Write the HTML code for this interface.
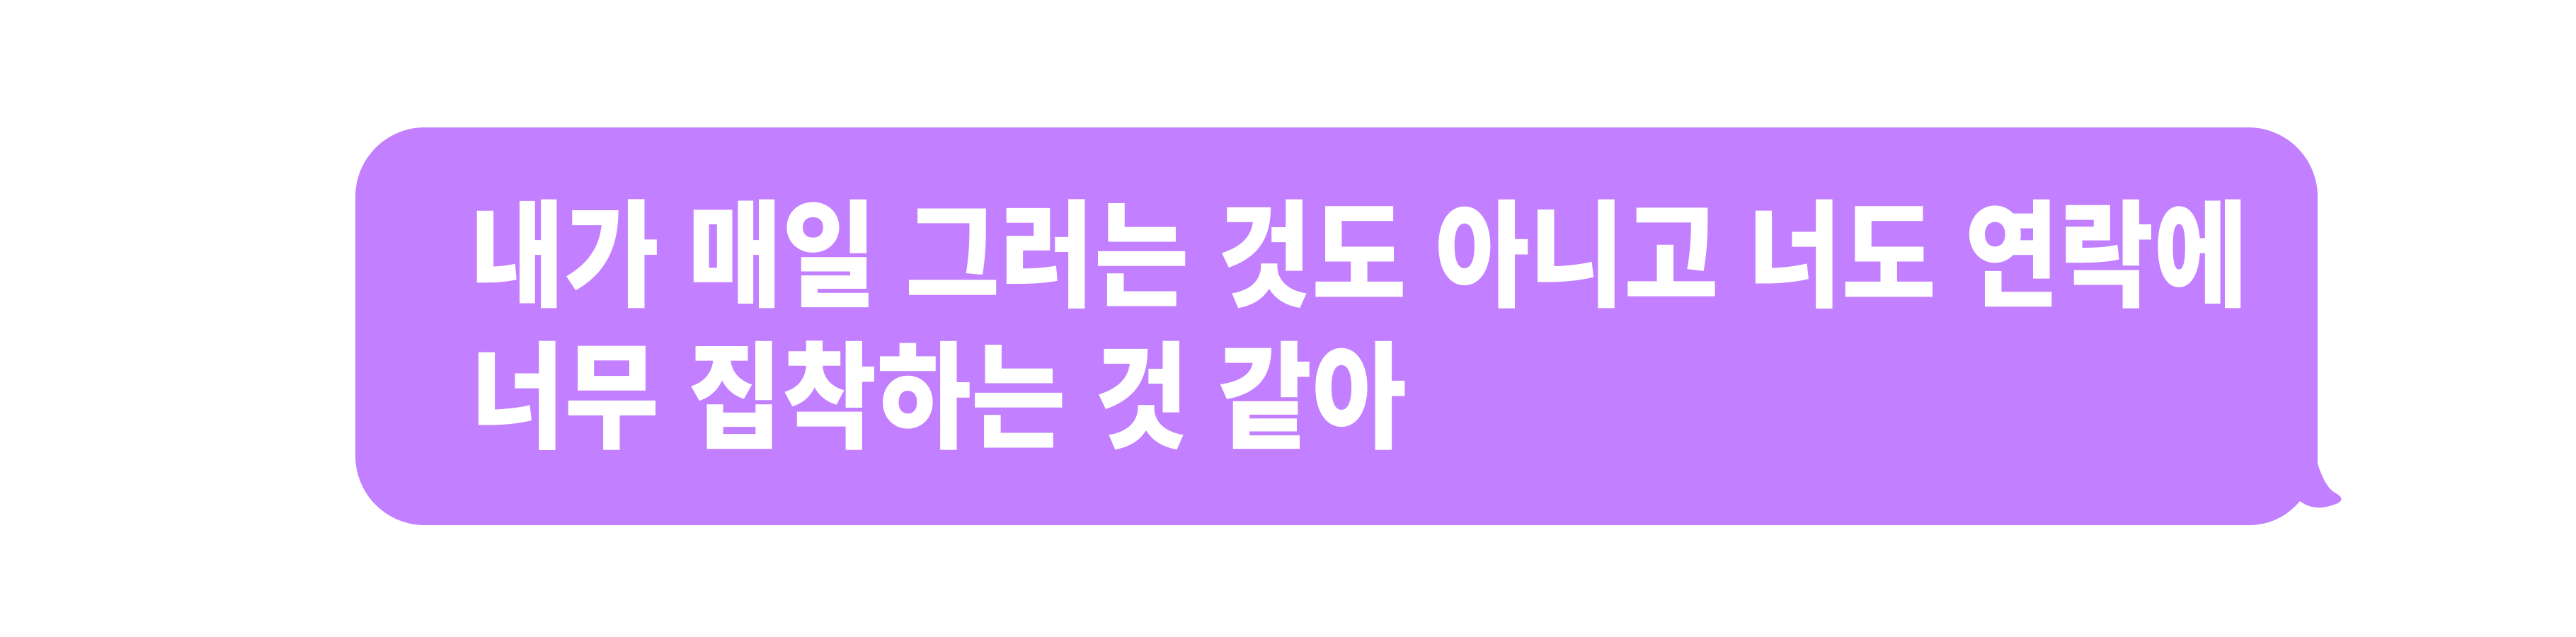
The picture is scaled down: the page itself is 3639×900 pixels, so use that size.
<!DOCTYPE html>
<html><head><meta charset="utf-8"><style>
html,body{margin:0;padding:0;background:#fff;}
body{width:3639px;height:900px;position:relative;overflow:hidden;}
.t{position:absolute;left:664px;font-family:"Liberation Sans","Noto Sans CJK KR",sans-serif;font-weight:900;font-size:164px;line-height:164px;color:#fff;white-space:nowrap;transform:scaleX(0.885);transform-origin:0 0;}
</style></head><body>
<svg width="3639" height="900" style="position:absolute;left:0;top:0">
<path fill="#c27fff" d="M600 180 H3176 A98 98 0 0 1 3274 278 V655 Q3285 690 3300 697 Q3315 706 3300 712 Q3270 724 3249 708 Q3220 742 3176 742 H600 A98 98 0 0 1 502 644 V278 A98 98 0 0 1 600 180 Z"/>
</svg>
<div class="t" style="top:282px">내가 매일 그러는 것도 아니고 너도 연락에</div>
<div class="t" style="top:482px">너무 집착하는 것 같아</div>
</body></html>
